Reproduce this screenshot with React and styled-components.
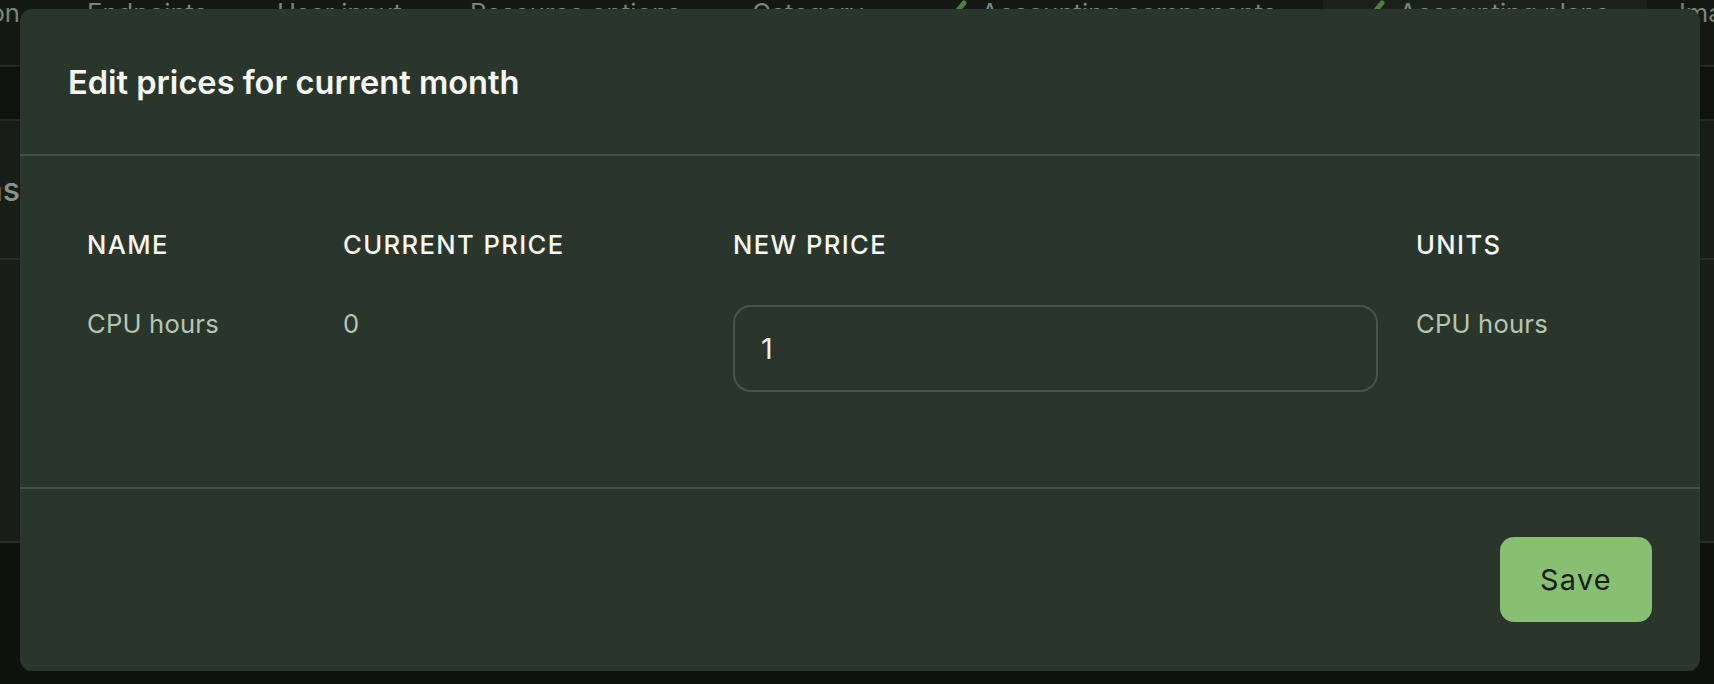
import React from "react";
import styled, { createGlobalStyle } from "styled-components";

const GlobalStyle = createGlobalStyle`
  html, body { margin: 0; padding: 0; background: #0e120e; }
  body { font-family: Inter, "Noto Sans", sans-serif; overflow: hidden; }
  * { box-sizing: border-box; }
`;

const Page = styled.div`
  width: 1714px;
  height: 684px;
  position: relative;
  overflow: hidden;
  background: #0e120e;
  display: flex;
  flex-direction: column;
`;

const TabBar = styled.div`
  height: 67px;
  flex: none;
  background: #141914;
  border-bottom: 2px solid #232a24;
  overflow: hidden;
`;

const TabTrack = styled.div`
  display: flex;
  height: 100%;
  margin-left: -145px;
`;

const Tab = styled.div`
  flex: none;
  width: ${(p) => p.$w}px;
  height: 100%;
  display: flex;
  align-items: flex-start;
  justify-content: ${(p) => (p.$end ? "flex-end" : "flex-start")};
  gap: 14px;
  padding: 0 ${(p) => (p.$end ? "35px" : "0")} 0 ${(p) => (p.$end ? "0" : "32px")};
  background: ${(p) => (p.$active ? "#1a201a" : "transparent")};
  color: #7b857b;
  font-size: 25.6px;
  line-height: 26px;
  white-space: nowrap;
`;

const Check = styled.svg`
  width: 30px;
  height: 26px;
  flex: none;
`;

const SubBar = styled.div`
  height: 54px;
  flex: none;
  background: #0f130f;
  border-bottom: 2px solid #232a24;
`;

const SectionHeader = styled.div`
  height: 139px;
  flex: none;
  display: flex;
  align-items: center;
  background: #171d18;
  border-bottom: 2px solid #262e27;
`;

const SectionTitle = styled.div`
  width: 300px;
  margin-left: -280px;
  text-align: right;
  color: #8a938a;
  font-size: 32px;
  font-weight: 500;
  white-space: nowrap;
`;

const ContentArea = styled.div`
  height: 283px;
  flex: none;
  background: #171d18;
  border-bottom: 2px solid #262e27;
`;

const Overlay = styled.div`
  position: absolute;
  inset: 0;
  padding: 9px 14px 13px 20px;
  display: flex;
`;

const Modal = styled.div`
  flex: 1;
  display: flex;
  flex-direction: column;
  background: #2a362b;
  border-radius: 12px;
  color: #f3f5f3;
`;

const ModalHeader = styled.div`
  height: 147px;
  flex: none;
  display: flex;
  align-items: center;
  padding: 0 48px 0 48px;
  border-bottom: 2px solid #435046;
`;

const Title = styled.h2`
  margin: 0;
  font-size: 32.6px;
  font-weight: 600;
  color: #f6f7f6;
`;

const ModalBody = styled.div`
  flex: none;
  height: 333px;
  padding: 70px 48px 0;
  border-bottom: 2px solid #435046;
`;

const PriceGrid = styled.div`
  display: grid;
  grid-template-columns: 256px 390px 683px 1fr;
  row-gap: 41px;
  align-items: start;
`;

const HeadCell = styled.div`
  padding: 0 19px;
  font-size: 25.6px;
  line-height: 38px;
  font-weight: 500;
  letter-spacing: 1.4px;
  text-transform: uppercase;
  color: #f6f7f6;
  white-space: nowrap;
`;

const Cell = styled.div`
  padding: 0 19px;
  font-size: 25.6px;
  line-height: 38px;
  letter-spacing: 0.2px;
  color: #b6c5b3;
  white-space: nowrap;
`;

const PriceInput = styled.input`
  display: block;
  width: 645px;
  height: 87px;
  padding: 0 26px;
  background: transparent;
  border: 2px solid #485649;
  border-radius: 18px;
  color: #f1f3f1;
  font-family: Inter, "Noto Sans", sans-serif;
  font-size: 28.8px;
  outline: none;
`;

const ModalFooter = styled.div`
  flex: 1;
  display: flex;
  align-items: center;
  justify-content: flex-end;
  padding: 0 48px 2px;
`;

const SaveButton = styled.button`
  width: 152px;
  height: 85px;
  border: none;
  border-radius: 14px;
  background: #88bf72;
  color: #172016;
  font-family: Inter, "Noto Sans", sans-serif;
  font-size: 28.8px;
  font-weight: 400;
  letter-spacing: 1.3px;
  cursor: pointer;
`;

const CheckIcon = () => (
  <Check viewBox="0 0 30 26">
    <path d="M3 14 L11 22 L27 3" fill="none" stroke="#4f7d3f" strokeWidth="5" strokeLinecap="round" strokeLinejoin="round" />
  </Check>
);

const tabs = [
  { label: "Configuration", w: 200, end: true },
  { label: "Endpoints", w: 190 },
  { label: "User input", w: 193 },
  { label: "Resource options", w: 282 },
  { label: "Category", w: 185 },
  { label: "Accounting components", w: 418, check: true },
  { label: "Accounting plans", w: 324, check: true, active: true },
  { label: "Images", w: 200 },
];

export default function App() {
  return (
    <>
      <GlobalStyle />
      <Page>
        <TabBar>
          <TabTrack>
            {tabs.map((t) => (
              <Tab key={t.label} $w={t.w} $end={t.end} $active={t.active}>
                {t.check && <CheckIcon />}
                {t.label}
              </Tab>
            ))}
          </TabTrack>
        </TabBar>
        <SubBar />
        <SectionHeader>
          <SectionTitle>Accounting plans</SectionTitle>
        </SectionHeader>
        <ContentArea />
        <Overlay>
          <Modal role="dialog" aria-label="Edit prices for current month">
            <ModalHeader>
              <Title>Edit prices for current month</Title>
            </ModalHeader>
            <ModalBody>
              <PriceGrid>
                <HeadCell>Name</HeadCell>
                <HeadCell>Current price</HeadCell>
                <HeadCell>New price</HeadCell>
                <HeadCell>Units</HeadCell>
                <Cell>CPU hours</Cell>
                <Cell>0</Cell>
                <Cell>
                  <PriceInput type="text" defaultValue="1" />
                </Cell>
                <Cell>CPU hours</Cell>
              </PriceGrid>
            </ModalBody>
            <ModalFooter>
              <SaveButton>Save</SaveButton>
            </ModalFooter>
          </Modal>
        </Overlay>
      </Page>
    </>
  );
}
